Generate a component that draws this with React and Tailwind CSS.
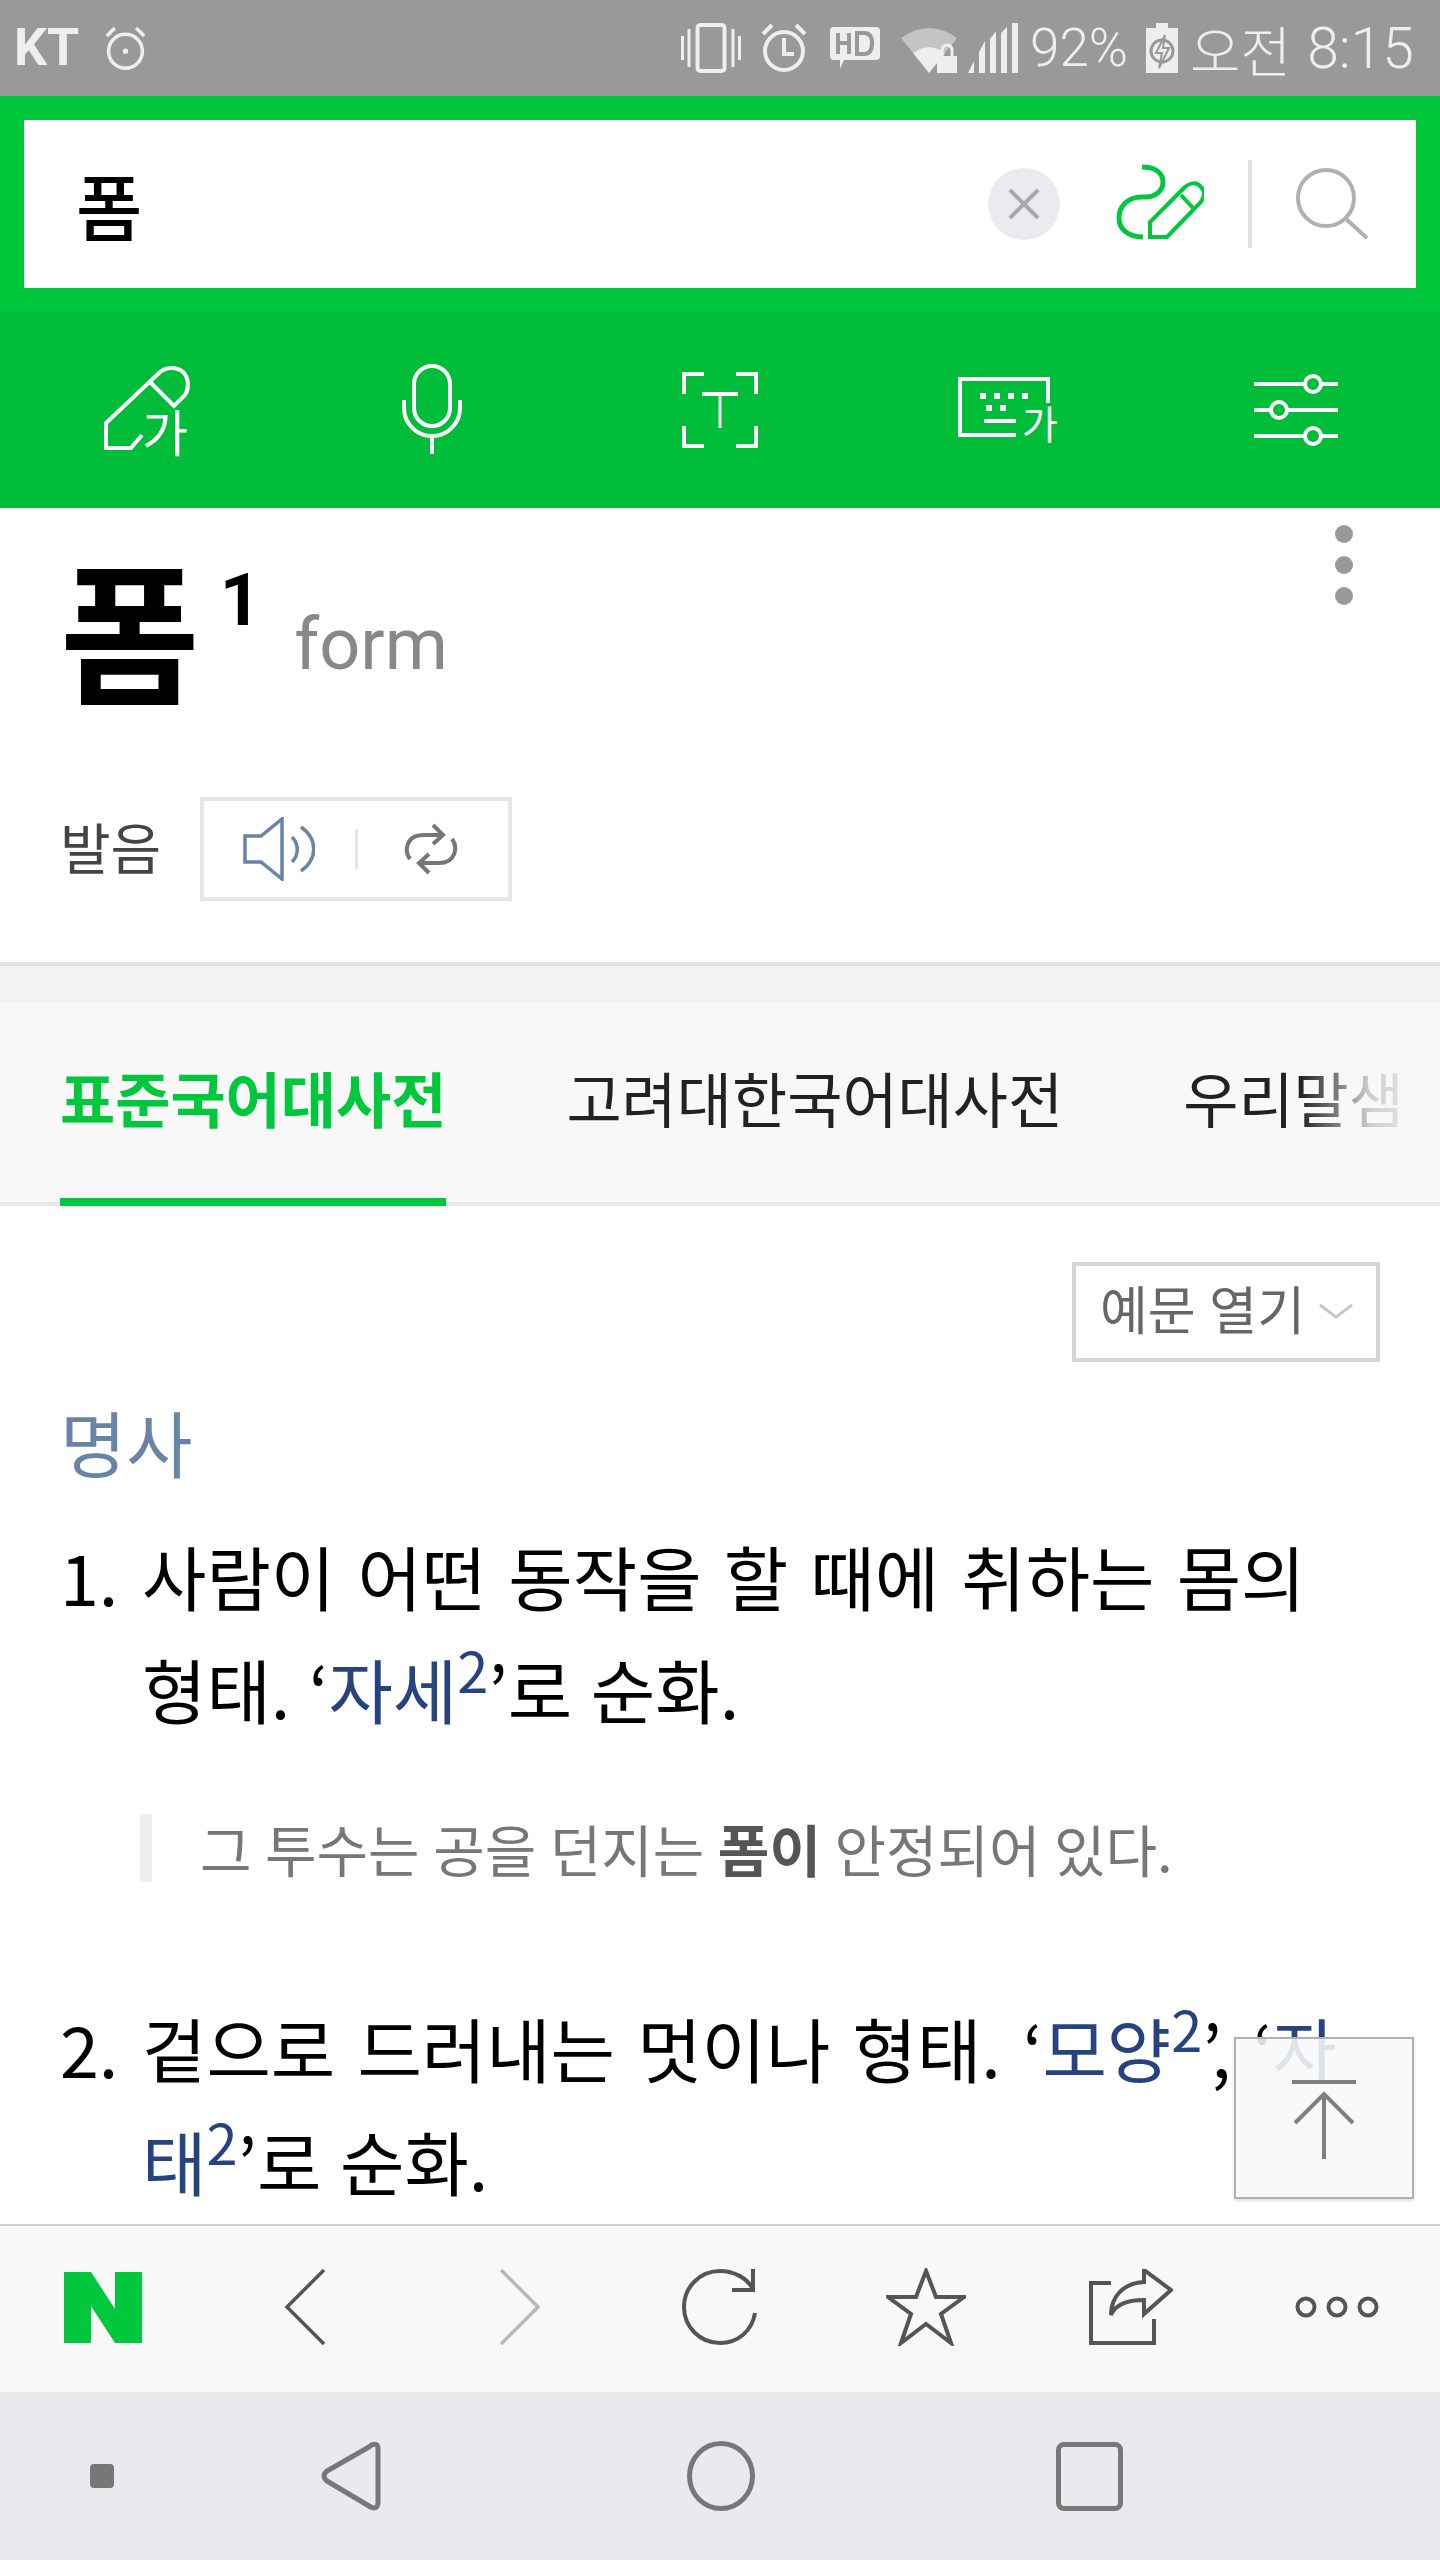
import React from "react";

const kr = "font-['Noto_Sans_CJK_KR',sans-serif]";

function Vibrate() {
  return (
    <svg width="60" height="50" viewBox="0 0 60 50" fill="none" stroke="#eeeeee">
      <rect x="16.5" y="2" width="27" height="46" rx="3" strokeWidth="4" />
      <path d="M1.5 13V37M8 6V44M52 6V44M58.5 13V37" strokeWidth="3" />
    </svg>
  );
}

function AlarmIcon({ size, small }) {
  return (
    <svg width={size} height={size + 4} viewBox="0 0 46 50" fill="none" stroke="#eeeeee">
      <circle cx="23" cy="28" r="19" strokeWidth="4" />
      {small ? (
        <circle cx="23" cy="28" r="3" fill="#eeeeee" stroke="none" />
      ) : (
        <path d="M23 15V31H33" strokeWidth="4" />
      )}
      <path d="M2 11L11 2M44 11L35 2" strokeWidth="4" />
    </svg>
  );
}

function StatusIcons() {
  return (
    <div className="ml-auto flex items-center">
      <Vibrate />
      <div className="ml-[20px]">
        <AlarmIcon size={46} />
      </div>
      {/* HD bubble */}
      <div className="ml-[23px] h-[42px]">
        <svg width="50" height="42" viewBox="0 0 50 42">
          <path d="M4 0H46Q50 0 50 4V29Q50 33 46 33H14L10 42V33H4Q0 33 0 29V4Q0 0 4 0Z" fill="#eeeeee" />
          <path d="M8 6V27M8 16H19M19 6V27" stroke="#999999" strokeWidth="4" fill="none" />
          <path d="M27 6H34Q42 6 42 16Q42 27 34 27H27Z" stroke="#999999" strokeWidth="4" fill="none" />
        </svg>
      </div>
      {/* wifi + lock */}
      <div className="ml-[21px] mt-[4px] h-[46px]">
        <svg width="64" height="46" viewBox="0 0 64 46">
          <path d="M0 11Q28 -9 56 11L44 26Q28 14 12 26Z" fill="#c4c4c4" />
          <path d="M12 26Q28 14 44 26L28 46Z" fill="#eeeeee" />
          <rect x="36" y="29" width="20" height="17" fill="#eeeeee" />
          <path d="M41 30V24Q41 18 46 18Q51 18 51 24V30" fill="none" stroke="#eeeeee" strokeWidth="3" />
        </svg>
      </div>
      <div className="ml-[3px]">
        <svg width="50" height="50" viewBox="0 0 50 50" fill="#eeeeee">
          <path d="M0 50L6 38V50ZM11 50V29L17 18V50ZM22 50V16L28 8V50ZM33 50V10L39 4V50ZM44 50V0L50 0V50Z" />
        </svg>
      </div>
      <span className="ml-[12px] font-['Roboto',sans-serif] text-[53px] leading-none font-light text-[#eeeeee]">92%</span>
      <div className="ml-[18px]">
        <svg width="32" height="50" viewBox="0 0 32 50">
          <path d="M10 0H22V5H32V50H0V5H10Z" fill="#eeeeee" />
          <circle cx="16" cy="28" r="11" fill="none" stroke="#999999" strokeWidth="3" />
          <path d="M19 12L10 30H16L13 45L23 25H17Z" fill="#eeeeee" stroke="#999999" strokeWidth="2" />
        </svg>
      </div>
      <span className={`ml-[12px] ${kr} text-[55px] leading-none font-light text-[#eeeeee]`}>오전</span>
      <span className="ml-[16px] font-['Roboto',sans-serif] text-[57px] leading-none font-light text-[#eeeeee]">8:15</span>
    </div>
  );
}

function StatusBar() {
  return (
    <div className="flex h-[96px] shrink-0 items-center bg-[#999999] pr-[26px] pl-[14px]">
      <span className="font-['Roboto',sans-serif] text-[52px] leading-none font-bold text-[#eeeeee]">KT</span>
      <div className="ml-[26px]">
        <AlarmIcon size={41} small />
      </div>
      <StatusIcons />
    </div>
  );
}

function SearchBox() {
  return (
    <div className="shrink-0 bg-[#00c73c] p-[24px]">
      <div className="flex h-[168px] items-center bg-white pr-[48px] pl-[52px]">
        <span className={`${kr} text-[72px] leading-none font-medium text-black`}>폼</span>
        <div className="ml-auto flex h-[72px] w-[72px] items-center justify-center rounded-full bg-[#e9ebee]">
          <svg width="32" height="32" viewBox="0 0 32 32" stroke="#a8a8a8" strokeWidth="4">
            <path d="M2 2L30 30M30 2L2 30" />
          </svg>
        </div>
        <div className="-mt-[4px] ml-[56px]">
          <svg width="88" height="76" viewBox="0 0 88 76" fill="none" stroke="#00c73c">
            <path d="M26 3C38 3 47 8 47 18C47 27 39 33 30 33H26C12 33 3 42 3 54C3 65 12 73 27 73" strokeWidth="5" />
            <path d="M34 73V58L68 24C74 18 81 18 85 23C89 27 89 33 84 39L51 73Z" strokeWidth="4" />
            <path d="M65 31L77 44" strokeWidth="4" />
          </svg>
        </div>
        <div className="ml-[44px] h-[88px] w-[4px] bg-[#e0e0e0]" />
        <div className="ml-[44px]">
          <svg width="72" height="72" viewBox="0 0 72 72" fill="none" stroke="#b0b0b0" strokeWidth="4">
            <circle cx="30" cy="30" r="28" />
            <path d="M50 51L71 70" />
          </svg>
        </div>
      </div>
    </div>
  );
}

function ToolRow() {
  return (
    <div className="grid h-[196px] shrink-0 grid-cols-5 items-center justify-items-center bg-[#00bd39]">
      <svg className="mt-[5px] ml-[5px] overflow-visible" width="85" height="93" viewBox="0 0 85 93" fill="none" stroke="#ffffff" strokeWidth="4">
        <path d="M38 69L27 82H2V57L56 6C64 0 74 1 80 7C85 13 85 23 81 29L70 40L46 16" />
        <text x="38" y="86" fontSize="50" fill="#ffffff" stroke="none" fontFamily="Noto Sans CJK KR">가</text>
      </svg>
      <svg className="-mt-[2px]" width="60" height="90" viewBox="0 0 60 90" fill="none" stroke="#ffffff" strokeWidth="4">
        <rect x="12" y="2" width="36" height="60" rx="18" />
        <path d="M2 36V44A28 28 0 0 0 58 44V36M30 72V90" />
      </svg>
      <svg width="76" height="76" viewBox="0 0 76 76" fill="none" stroke="#ffffff" strokeWidth="4">
        <path d="M2 22V2H22M54 2H74V22M2 54V74H22M54 74H74V54" />
        <path d="M20 22H56" />
        <path d="M38 22V56" strokeWidth="3" />
      </svg>
      <svg className="overflow-visible" width="100" height="66" viewBox="0 0 100 66" fill="none" stroke="#ffffff" strokeWidth="4">
        <path d="M58 58H2V2H90V26" />
        <path d="M25 16V22M39 16V22M53 16V22M67 16V22M31 28V34M45 28V34" strokeWidth="6" />
        <path d="M26 44H58" />
        <text x="64" y="62" fontSize="39" fill="#ffffff" stroke="none" fontFamily="Noto Sans CJK KR">가</text>
      </svg>
      <svg width="84" height="72" viewBox="0 0 84 72" fill="none" stroke="#ffffff" strokeWidth="4">
        <path d="M0 10H51M67 10H84M0 36H17M33 36H84M0 62H51M67 62H84" />
        <circle cx="59" cy="10" r="8" />
        <circle cx="25" cy="36" r="8" />
        <circle cx="59" cy="62" r="8" />
      </svg>
    </div>
  );
}

function TitleBlock() {
  return (
    <div className="relative h-[494px] shrink-0 bg-[#f1f2f4]">
      <div className="h-[458px] border-b-4 border-[#e4e5e6] bg-white pt-[39px] pl-[60px]">
        <div className="flex items-start">
          <span className={`${kr} text-[152px] leading-[160px] font-bold text-black`}>폼</span>
          <span className="mt-[14px] ml-[20px] font-['Roboto',sans-serif] text-[72px] leading-[80px] font-bold text-black">1</span>
          <span className="mt-[58px] ml-[33px] font-['Roboto',sans-serif] text-[72px] leading-[80px] text-[#888888]">form</span>
        </div>
        <div className="mt-[90px] flex items-center">
          <span className={`${kr} w-[140px] pb-[8px] text-[55px] leading-none text-[#444444]`}>발음</span>
          <div className="flex h-[104px] w-[312px] items-center border-4 border-[#e6e6e6] bg-white pl-[39px]">
            <svg width="72" height="64" viewBox="0 0 72 64" fill="none" stroke="#6a84a8" strokeWidth="3.5">
              <path d="M2 19H18L39 2V62L18 45H2Z" />
              <path d="M49 20C56 27 56 38 49 45M58 10C75 22 75 42 58 54" />
            </svg>
            <div className="ml-[40px] h-[40px] w-[3px] bg-[#e6e6e6]" />
            <div className="ml-[45px]">
              <svg width="56" height="52" viewBox="0 0 56 52" fill="none" stroke="#777777" strokeWidth="4">
                <path d="M7 36C1 28 3 12 20 12H38M30 2L40 12L30 21" />
                <path d="M49 16C55 24 53 40 36 40H18M26 31L16 40L26 50" />
              </svg>
            </div>
          </div>
        </div>
      </div>
      {/* menu dots */}
      <div className="absolute top-[17px] right-[87px] flex flex-col gap-[13px]">
        <div className="h-[18px] w-[18px] rounded-full bg-[#999999]" />
        <div className="h-[18px] w-[18px] rounded-full bg-[#999999]" />
        <div className="h-[18px] w-[18px] rounded-full bg-[#999999]" />
      </div>
    </div>
  );
}

function Tabs() {
  return (
    <div className="relative flex h-[204px] shrink-0 items-stretch border-b-4 border-[#e8e8e8] bg-[#f8f8f8] pl-[60px]">
      <div className="-mb-[4px] flex items-center border-b-[8px] border-[#00c73c] pb-[6px]">
        <span className={`${kr} text-[60px] leading-none font-bold text-[#00c73c]`}>표준국어대사전</span>
      </div>
      <div className={`ml-[120px] flex items-center pb-[10px] ${kr} text-[60px] leading-none whitespace-nowrap text-[#222222]`}>고려대한국어대사전</div>
      <div className={`ml-[120px] flex items-center pb-[10px] ${kr} text-[60px] leading-none whitespace-nowrap text-[#222222]`}>우리말샘</div>
      <div className="absolute top-0 right-0 bottom-0 w-[140px] bg-gradient-to-r from-[#f8f8f800] via-[#f8f8f8cc] to-[#f8f8f8]" />
    </div>
  );
}

function Link({ children, sup }) {
  return (
    <span className="text-[#27437f]">
      {children}
      {sup && <sup className="relative -top-[26px] align-baseline text-[56px] leading-none">{sup}</sup>}
    </span>
  );
}

function Definition() {
  return (
    <div className={`relative flex-1 overflow-hidden bg-white px-[60px] ${kr}`}>
      <div className="flex justify-end pt-[56px]">
        <div className="flex h-[100px] w-[308px] items-center border-4 border-[#d5d5d8] pb-[8px] pl-[24px] text-[52px] leading-none [word-spacing:2px] text-[#666666]">
          예문 열기
          <svg className="mt-[6px] ml-[14px]" width="34" height="16" viewBox="0 0 34 16" fill="none" stroke="#c8c8c8" strokeWidth="3">
            <path d="M1 2L17 14L33 2" />
          </svg>
        </div>
      </div>
      <div className="mt-[39px] text-[72px] leading-[80px] text-[#6a84a8]">명사</div>
      <div className="mt-[38px] flex text-[70px] leading-[113px] [word-spacing:6.5px] text-black">
        <span className="w-[82px] shrink-0">1.</span>
        <div className="whitespace-nowrap">
          사람이 어떤 동작을 할 때에 취하는 몸의
          <br />
          <span className="[word-spacing:3px]">
            형태. ‘<Link sup="2">자세</Link>’로 순화.
          </span>
        </div>
      </div>
      <div className="mt-[69px] ml-[80px] flex h-[68px] items-center border-l-[12px] border-[#eeeeee] pl-[48px] text-[56px] leading-none [word-spacing:1px] whitespace-nowrap text-[#777777]">
        그 투수는 공을 던지는&nbsp;<b className="font-bold text-[#555555]">폼이</b>&nbsp;안정되어 있다.
      </div>
      <div className="mt-[109px] flex text-[70px] leading-[113px] [word-spacing:6.5px] text-black">
        <span className="w-[82px] shrink-0">2.</span>
        <div className="whitespace-nowrap">
          겉으로 드러내는 멋이나 형태. ‘<Link sup="2">모양</Link>’, ‘<Link>자</Link>
          <br />
          <span className="[word-spacing:3px]">
            <Link sup="2">태</Link>’로 순화.
          </span>
        </div>
      </div>
      {/* scroll to top */}
      <div className="absolute top-[831px] left-[1234px] flex h-[162px] w-[180px] flex-col items-center border-2 border-[#b0b0b0] bg-[#f8f8f8e0] pt-[41px] shadow-[0_2px_3px_#00000020]">
        <svg width="64" height="80" viewBox="0 0 64 80" fill="none" stroke="#808080" strokeWidth="4">
          <path d="M0 2H64" />
          <path d="M3 43L32 14L61 43M32 14V79" />
        </svg>
      </div>
    </div>
  );
}

function BottomBar() {
  return (
    <div className="grid h-[168px] shrink-0 grid-cols-7 items-center justify-items-center border-t-2 border-[#cfd2d2] bg-[#f8f8f8] pb-[4px]">
      <svg width="78" height="71" viewBox="0 0 78 71" fill="#00c73c">
        <path d="M0 0H27L51 37V0H78V71H51L27 34V71H0Z" />
      </svg>
      <svg className="-ml-[8px]" width="40" height="76" viewBox="0 0 40 76" fill="none" stroke="#555555" strokeWidth="3.5">
        <path d="M39 1L2 38L39 75" />
      </svg>
      <svg className="ml-[12px]" width="40" height="76" viewBox="0 0 40 76" fill="none" stroke="#b8b8b8" strokeWidth="3.5">
        <path d="M1 1L38 38L1 75" />
      </svg>
      <svg width="76" height="76" viewBox="0 0 76 76" fill="none" stroke="#555555" strokeWidth="4">
        <path d="M71 20C65 9 52 2 38 2C18 2 2 18 2 38C2 58 18 74 38 74C56 74 70 62 73 44" />
        <path d="M71 0V21H50" />
      </svg>
      <svg width="80" height="78" viewBox="0 0 80 78" fill="none" stroke="#555555" strokeWidth="4">
        <path d="M40 3L50 29H78L55 46L65 75L40 56L15 75L25 46L2 29H30Z" />
      </svg>
      <svg width="84" height="76" viewBox="0 0 84 76" fill="none" stroke="#555555" strokeWidth="4">
        <path d="M22 14H2V74H65V50" />
        <path d="M55 1L82 21L55 45V31C40 31 27 34 22 46C22 26 36 14 55 13Z" />
      </svg>
      <svg width="84" height="22" viewBox="0 0 84 22" fill="none" stroke="#555555" strokeWidth="4">
        <circle cx="11" cy="11" r="8.5" />
        <circle cx="42" cy="11" r="8.5" />
        <circle cx="73" cy="11" r="8.5" />
      </svg>
    </div>
  );
}

function NavBar() {
  return (
    <div className="flex h-[168px] shrink-0 items-center bg-[#e9eaee] pl-[90px]">
      <div className="h-[24px] w-[24px] rounded-[4px] bg-[#777777]" />
      <svg className="ml-[207px]" width="60" height="70" viewBox="0 0 60 70" fill="none" stroke="#777777" strokeWidth="5" strokeLinejoin="round">
        <path d="M56 4Q52 2 48 6L6 30Q0 35 6 40L48 65Q56 70 57 62V8Q57 5 56 4Z" />
      </svg>
      <svg className="ml-[306px]" width="68" height="70" viewBox="0 0 68 70" fill="none" stroke="#777777" strokeWidth="5">
        <ellipse cx="34" cy="35" rx="31.5" ry="32.5" />
      </svg>
      <div className="ml-[301px] h-[69px] w-[67px] rounded-[8px] border-[5px] border-[#777777]" />
    </div>
  );
}

export default function App() {
  return (
    <div className="flex h-[2560px] w-[1440px] flex-col overflow-hidden bg-white">
      <StatusBar />
      <SearchBox />
      <ToolRow />
      <TitleBlock />
      <Tabs />
      <Definition />
      <BottomBar />
      <NavBar />
    </div>
  );
}
